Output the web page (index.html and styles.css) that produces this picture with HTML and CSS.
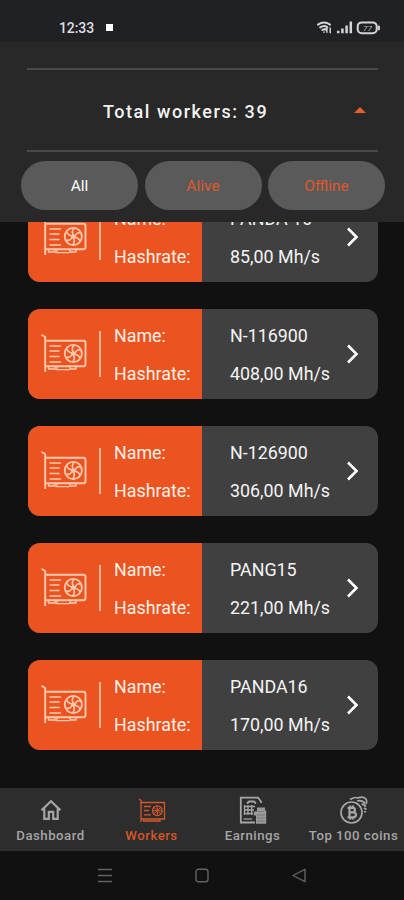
FILE: index.html
```
<!DOCTYPE html>
<html lang="en">
<head>
<meta charset="utf-8">
<title>Workers</title>
<link rel="stylesheet" href="styles.css">
</head>
<body>
<svg class="defs" width="0" height="0">
  <symbol id="gpu" viewBox="0 0 46 38">
    <g fill="none" stroke="currentColor" stroke-linejoin="round" stroke-linecap="round">
      <path stroke-width="1.9" d="M1.2 1.2 L4.2 3 V37.2 M4.2 6.8 H42.5 Q44.5 6.8 44.5 9 V30 Q44.5 32.2 42.5 32.2 H4.2"/>
      <path stroke-width="1.4" d="M7.5 32.5 V35 H14 V32.5 M15 35.6 H28 M16 33.5 V35.6 M29 32.5 V35 H35 V32.5"/>
      <path stroke-width="1.5" d="M9 12 H19.5 M9 17 H18 M9 22.5 H18 M9 28 H19.5"/>
      <circle cx="32.3" cy="19.5" r="8.6" stroke-width="1.8"/>
      <circle cx="32.3" cy="19.5" r="1.7" fill="currentColor"/>
      <path stroke-width="1.6" d="M32.3 18 Q30 14.5 33 11.5 M34 19 Q36 15 39 16 M33.8 20.5 Q37.5 20.5 39 24 M32.3 21 Q34.5 24 32 27.5 M31 20.5 Q29 24.5 26 23 M31 18.7 Q27 18.5 25.8 15"/>
    </g>
  </symbol>
</svg>
<div class="phone">
  <header class="status">
    <span class="clock">12:33</span><i class="dot"></i>
    <svg class="signals" width="66" height="16" viewBox="0 0 66 16">
      <g fill="none" stroke="#d4d4d6" stroke-linecap="round">
        <path stroke-width="2" d="M2 4.6 Q8 .4 14 4.6 M4.2 7.4 Q8 4.8 11.3 7.2 M6.3 10 Q8 8.8 9.5 9.8"/>
        <path stroke-width="1.5" d="M10.9 12.2 V8.2 M9.5 9.2 L10.9 7.7 M14.2 8 V12.8 M8 12 V12.2"/>
        <path stroke-width="2.5" stroke-linecap="butt" d="M22.2 13.3 V10.8 M26.4 13.3 V8.6 M30.6 13.3 V5.6 M34.8 13.3 V1.6"/>
        <rect x="41.7" y="2.4" width="19" height="10.8" rx="4" stroke-width="2"/>
        <path stroke-width="2.2" d="M62.8 6.5 V9.3"/>
      </g>
      <text x="51.4" y="10.8" text-anchor="middle" class="level">77</text>
    </svg>
  </header>
  <section class="head">
    <div class="total"><span>Total workers: 39</span><i class="up"></i></div>
    <div class="filters"><button class="on">All</button><button>Alive</button><button>Offline</button></div>
  </section>
  <main class="list">
    <article class="card">
      <div class="left"><svg class="gpu"><use href="#gpu"/></svg><i class="bar"></i><div class="txt"><span>Name:</span><span>Hashrate:</span></div></div>
      <div class="right"><div class="txt"><span>PANDA 16</span><span>85,00 Mh/s</span></div><svg class="chev" viewBox="0 0 14 20"><path d="M2 1.5 L10.5 10 L2 18.5"/></svg></div>
    </article>
    <article class="card">
      <div class="left"><svg class="gpu"><use href="#gpu"/></svg><i class="bar"></i><div class="txt"><span>Name:</span><span>Hashrate:</span></div></div>
      <div class="right"><div class="txt"><span>N-116900</span><span>408,00 Mh/s</span></div><svg class="chev" viewBox="0 0 14 20"><path d="M2 1.5 L10.5 10 L2 18.5"/></svg></div>
    </article>
    <article class="card">
      <div class="left"><svg class="gpu"><use href="#gpu"/></svg><i class="bar"></i><div class="txt"><span>Name:</span><span>Hashrate:</span></div></div>
      <div class="right"><div class="txt"><span>N-126900</span><span>306,00 Mh/s</span></div><svg class="chev" viewBox="0 0 14 20"><path d="M2 1.5 L10.5 10 L2 18.5"/></svg></div>
    </article>
    <article class="card">
      <div class="left"><svg class="gpu"><use href="#gpu"/></svg><i class="bar"></i><div class="txt"><span>Name:</span><span>Hashrate:</span></div></div>
      <div class="right"><div class="txt"><span>PANG15</span><span>221,00 Mh/s</span></div><svg class="chev" viewBox="0 0 14 20"><path d="M2 1.5 L10.5 10 L2 18.5"/></svg></div>
    </article>
    <article class="card">
      <div class="left"><svg class="gpu"><use href="#gpu"/></svg><i class="bar"></i><div class="txt"><span>Name:</span><span>Hashrate:</span></div></div>
      <div class="right"><div class="txt"><span>PANDA16</span><span>170,00 Mh/s</span></div><svg class="chev" viewBox="0 0 14 20"><path d="M2 1.5 L10.5 10 L2 18.5"/></svg></div>
    </article>
  </main>
  <nav class="tabs">
    <a><svg width="28" height="30" viewBox="0 0 28 30"><path d="M4.5 15.2 L14 6.2 L23.5 15.2 M7.3 13.5 V23.8 H11.8 V16.8 H16.2 V23.8 H20.7 V13.5" fill="none" stroke="currentColor" stroke-width="2.2"/></svg><span>Dashboard</span></a>
    <a class="active"><svg width="28" height="30" viewBox="0 0 28 30"><g fill="none" stroke="currentColor" stroke-width="1.3">
      <path d="M1 4 L3 5.5 V27 M3 7.5 H26.5 V24 H3 M5.5 24.5 V26 H22 V24.5"/>
      <path d="M6 11.5 H13 M6 15.5 H11 M6 19.8 H13"/>
      <circle cx="19.3" cy="15.7" r="4.8"/>
      <path d="M19.3 11.5 V20 M15 15.7 H23.6 M16.3 12.7 L22.3 18.7 M22.3 12.7 L16.3 18.7" stroke-width="1"/>
    </g></svg><span>Workers</span></a>
    <a><svg width="28" height="30" viewBox="0 0 28 30">
      <path d="M22 8 V6.5 L19 2.7 H1.8 V27.5 H16" fill="none" stroke="currentColor" stroke-width="1.8"/>
      <path d="M8 8.5 L10 6.5 H15 L17 8.5" fill="none" stroke="currentColor" stroke-width="1.8"/>
      <path d="M5 11.5 H16 M5 15 H15 M5 18.5 H14 M5.5 10 V20 M9 10 V20 M12.7 10 V20" fill="none" stroke="currentColor" stroke-width="1.3"/>
      <path d="M4.5 24 H13" stroke="currentColor" stroke-width="1.2"/>
      <path d="M18 12.5 H26 V15.5 H27.2 V28.7 H17 V20.5 H14.8 V16.5 H18 Z" fill="currentColor" opacity=".9"/>
      <path d="M19 16.5 H25 M18 20 H26 M18 23 H26 M18 26 H26" stroke="#777" stroke-width=".9"/>
    </svg><span>Earnings</span></a>
    <a><svg width="28" height="30" viewBox="0 0 28 30">
      <g fill="none" stroke="currentColor" stroke-width="1.7">
        <circle cx="11.5" cy="17.5" r="10.5"/>
        <path d="M10 4.5 Q15 1.5 18 3 Q23 1 26 4 Q27.3 6.5 26 9 M17 6 Q22 4.5 25 8.5 M21.5 9.5 Q25 9 25.5 12 M24 13 L26.5 14.5 M24 16.5 L26 17"/>
        <path stroke-width="2.2" d="M7.5 12.8 H12.6 Q15 12.8 15 15 Q15 17.3 12.6 17.3 H9.5 M12.6 17.3 Q16 17.3 16 19.8 Q16 22.3 13 22.3 H7.5 M9.5 12.8 V22.3 M10.2 10.5 V12.8 M13 10.5 V12.8 M10.2 22.3 V24.4 M13 22.3 V24.4"/>
      </g>
    </svg><span>Top 100 coins</span></a>
  </nav>
  <footer class="system">
    <svg width="14" height="15" viewBox="0 0 14 15"><path d="M0 1.5 H14 M0 7.5 H14 M0 13.5 H14"/></svg>
    <svg width="14" height="15" viewBox="0 0 14 15"><rect x="1" y="1.3" width="12" height="12.4" rx="2.5"/></svg>
    <svg width="14" height="15" viewBox="0 0 14 15"><path d="M13 1.3 V13.7 L1 7.5 Z" stroke-linejoin="round"/></svg>
  </footer>
</div>
</body>
</html>
```
FILE: styles.css
```
* { box-sizing: border-box; }
body { margin: 0; background: #111; font-family: Roboto, "Liberation Sans", sans-serif; color: #f4f4f4; }
.defs { display: block; height: 0; }
.phone { width: 404px; height: 900px; display: flex; flex-direction: column; overflow: hidden; }
.status { flex: none; height: 42px; background: #202124; display: flex; align-items: center; padding: 13px 22px 0 59px; }
.clock { font-size: 14px; font-weight: 500; line-height: 16px; letter-spacing: -.1px; color: #dedee0; }
.dot { width: 7px; height: 7px; margin-left: 12px; background: #fff; }
.signals { margin-left: auto; }
.level { font-size: 8px; font-style: italic; fill: #b5b5b5; }
.head { flex: none; height: 180px; background: #282828; padding-top: 26px; }
.total { height: 84px; margin: 0 26px 0 27px; border-top: 2px solid #494949; border-bottom: 2px solid #494949; display: flex; align-items: center; padding: 2px 12px 0 76px; justify-content: space-between; font-size: 18px; font-weight: 500; letter-spacing: 1.55px; }
.up { border: 6px solid transparent; border-top: 0; border-bottom: 6px solid #e85d2c; margin-top: -3px; }
.filters { display: flex; gap: 6.5px; padding: 9px 19px 0 21px; }
.filters button { flex: 1; height: 49px; border: 0; padding: 0; border-radius: 25px; background: #5a5a5a; color: #df592c; font: 15.5px Roboto, sans-serif; }
.filters .on { color: #fafafa; }
.list { flex: 1; min-height: 0; overflow: hidden; display: flex; flex-direction: column; justify-content: flex-end; gap: 27px; padding: 0 26px 38px 28px; }
.card { flex: none; height: 90px; display: flex; border-radius: 12px; overflow: hidden; background: #404040; }
.left { width: 174px; background: #eb5420; display: flex; align-items: center; padding-left: 13px; }
.gpu { width: 46px; height: 38px; color: #ffc9ae; margin-top: -2px; }
.bar { width: 1.5px; height: 46px; background: #f7b394; margin-left: 12px; }
.txt { display: flex; flex-direction: column; gap: 17px; font-size: 17.85px; line-height: 21px; white-space: nowrap; }
.left .txt { margin-left: 13.5px; color: #fff0e7; }
.right { flex: 1; display: flex; align-items: center; justify-content: space-between; padding: 0 18px 0 28px; }
.chev { width: 14px; height: 20px; }
.chev path { fill: none; stroke: #fff; stroke-width: 2.6; }
.tabs { flex: none; height: 63px; background: #2d2d2d; display: grid; grid-template-columns: repeat(4, 1fr); color: #a6a6a6; }
.tabs a { display: flex; flex-direction: column; align-items: center; padding-top: 7px; font-size: 13.2px; line-height: 16px; font-weight: 500; letter-spacing: .5px; white-space: nowrap; gap: 3px; }
.tabs a svg { margin-left: 1px; }
.tabs .active { color: #d4572b; }
.system { flex: none; height: 49px; background: #111; display: flex; align-items: center; justify-content: center; gap: 83px; }
.system svg { fill: none; stroke: #626262; stroke-width: 1.4; }
```
